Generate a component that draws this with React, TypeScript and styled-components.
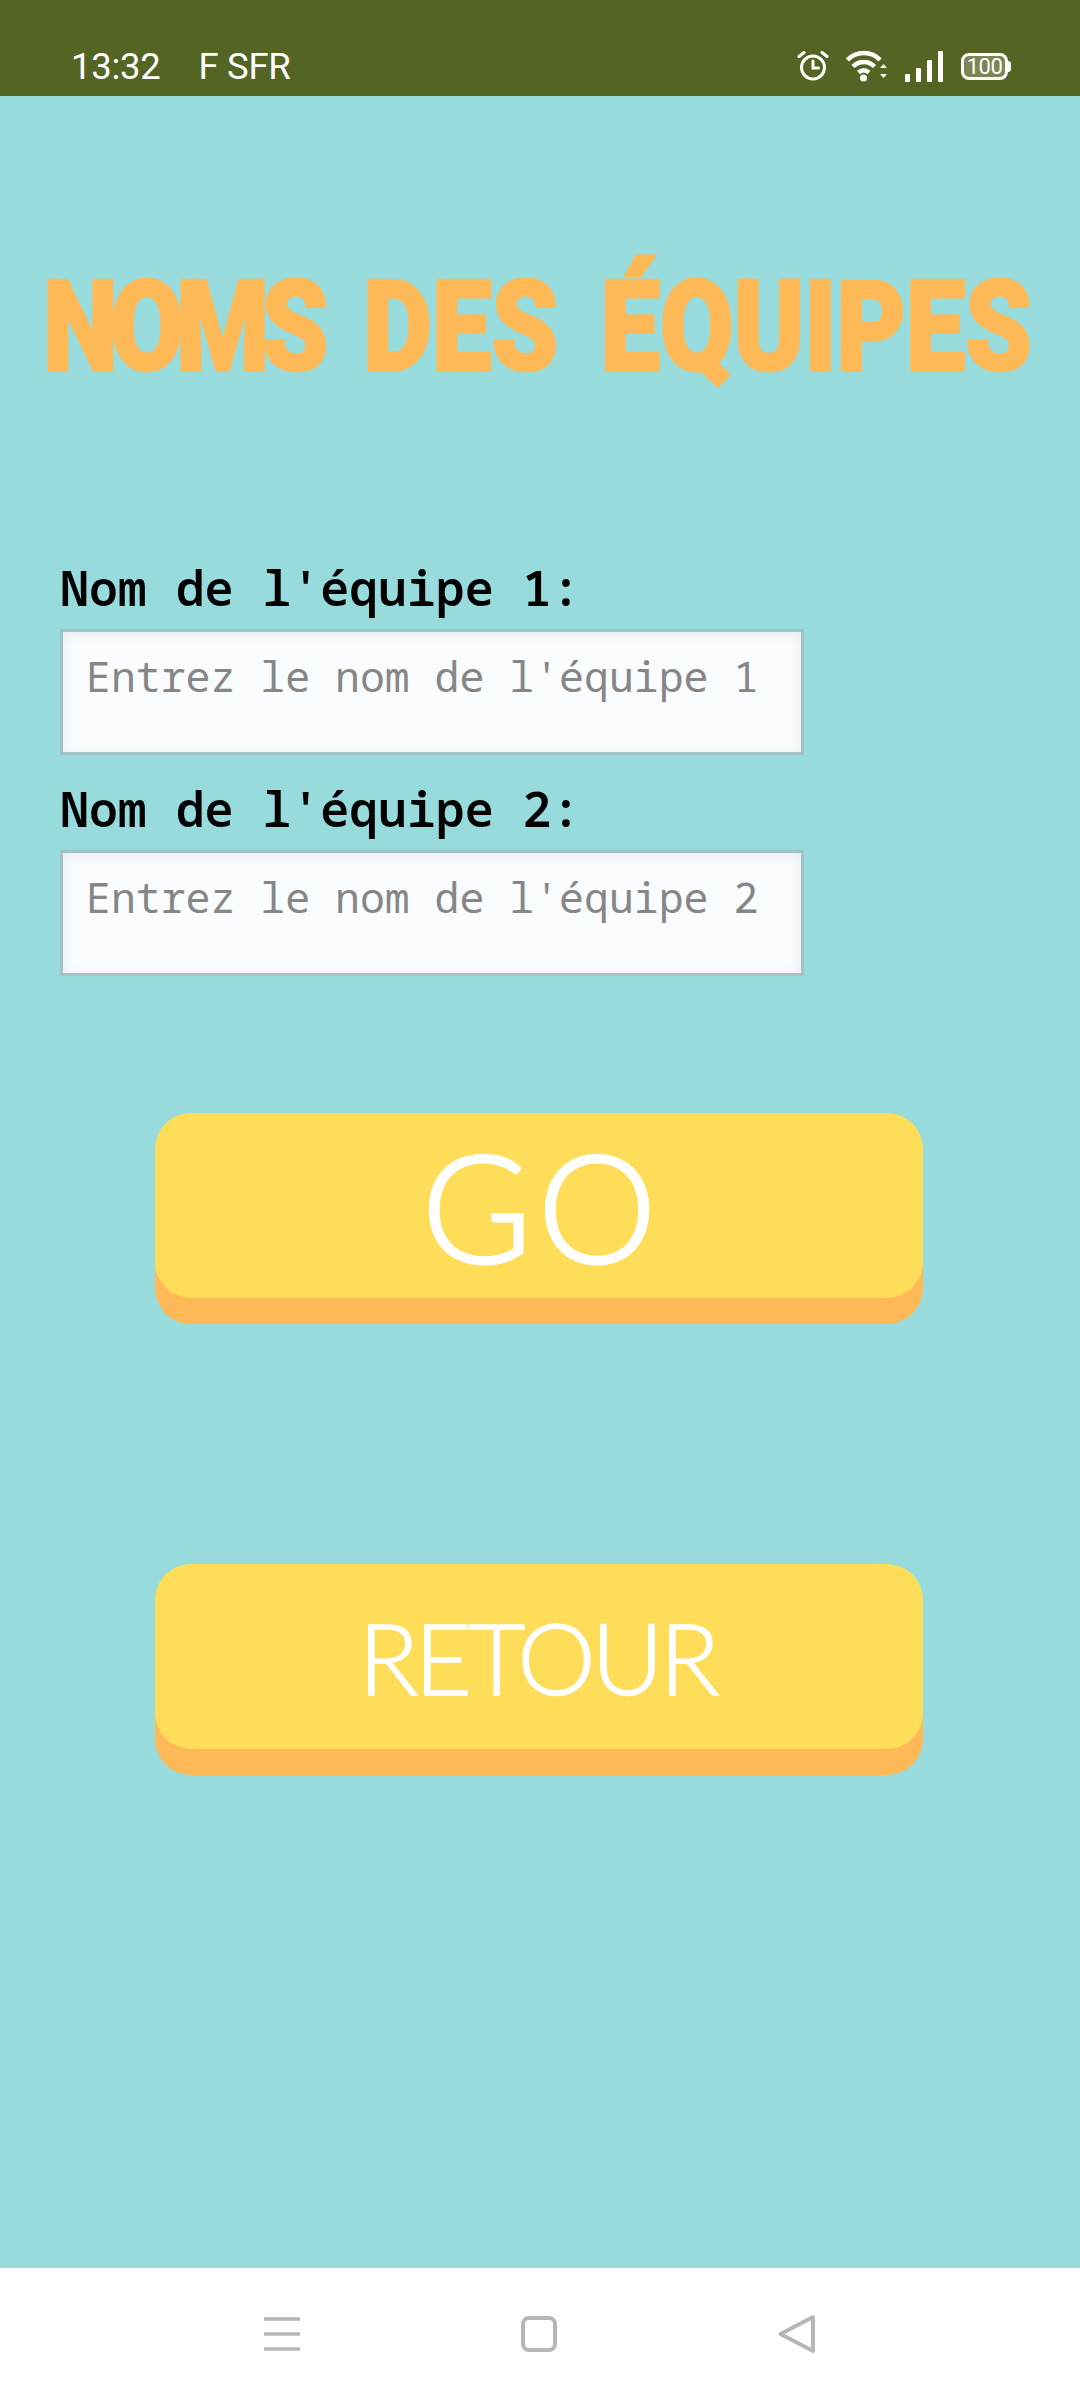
import React from "react";
import styled, { createGlobalStyle } from "styled-components";

const GlobalStyle = createGlobalStyle`
  html, body {
    margin: 0;
    padding: 0;
    background: #98dbdc;
  }
`;

const Screen = styled.div`
  width: 1080px;
  height: 2400px;
  display: flex;
  flex-direction: column;
  overflow: hidden;
  background: #98dbdc;
`;

const StatusBar = styled.header`
  height: 96px;
  flex: none;
  box-sizing: border-box;
  padding: 47px 69px 0 71px;
  display: flex;
  justify-content: space-between;
  align-items: flex-start;
  background: #536423;
  color: #fff;
  font-family: Roboto, "Liberation Sans", sans-serif;
  font-size: 36.5px;
  line-height: 40px;
  letter-spacing: -0.3px;
`;

const StatusLeft = styled.div`
  display: flex;
  gap: 38px;
`;

const StatusIcons = styled.div`
  display: flex;
  align-items: center;
  height: 38px;
  gap: 17px;
`;

const Main = styled.main`
  flex: 1;
  display: flex;
  flex-direction: column;
`;

const Title = styled.h1`
  margin: 156px 0 0 -5px;
  height: 150px;
  display: flex;
  justify-content: center;
  gap: 50px;
  white-space: nowrap;
  font-family: Roboto, "Liberation Sans", sans-serif;
  font-weight: 900;
  font-size: 126px;
  line-height: 150px;
  color: #ffb957;
  -webkit-text-stroke: 3px #ffb957;
  transform: scaleX(0.845);
`;

const Word = styled.span<{ $tracking?: number }>`
  letter-spacing: ${(props) => props.$tracking || 0}px;
`;

const Form = styled.form`
  margin: 159px 0 0 60px;
  display: flex;
  flex-direction: column;
`;

const Label = styled.label`
  font-family: "Noto Sans Mono", "DejaVu Sans Mono", "Liberation Mono", monospace;
  font-weight: 600;
  font-size: 48.2px;
  line-height: 52px;
  height: 68px;
  color: #000;
`;

const NameInput = styled.input`
  width: 744px;
  height: 126px;
  box-sizing: border-box;
  margin-bottom: 27px;
  padding: 0 23px 33px;
  border: 3px solid #a0c4c5;
  border-radius: 0;
  outline: none;
  background: #fafdff;
  box-shadow: inset 0 2px 12px rgba(0, 0, 0, 0.08);
  font-family: "Noto Sans Mono", "DejaVu Sans Mono", "Liberation Mono", monospace;
  font-size: 41.5px;

  &::placeholder {
    color: #868686;
    opacity: 1;
  }
`;

const Actions = styled.div`
  margin-top: 110px;
  padding-right: 2px;
  display: flex;
  flex-direction: column;
  align-items: center;
  gap: 240px;
`;

const BigButton = styled.button<{ $size: number; $tracking: number; $stroke: number }>`
  width: 768px;
  height: 185px;
  margin-bottom: 26px;
  padding: 0;
  border: none;
  border-radius: 36px;
  background: #ffdd59;
  box-shadow: 0 26px 0 #ffb957;
  color: #fff;
  font-family: Lato, "Open Sans", sans-serif;
  font-weight: 300;
  font-size: ${(props) => props.$size}px;
  letter-spacing: ${(props) => props.$tracking}px;
  text-indent: ${(props) => props.$tracking}px;
  -webkit-text-stroke: ${(props) => props.$stroke}px #fff;
  line-height: 181px;
`;

const NavBar = styled.nav`
  height: 132px;
  flex: none;
  display: flex;
  background: #fff;
  align-items: center;
  justify-content: center;
  gap: 221px;
  box-sizing: border-box;
`;

function AlarmIcon() {
  return (
    <svg width="32" height="30" viewBox="0 0 32 30" fill="none" stroke="#fff" strokeWidth="3">
      <circle cx="16" cy="16.5" r="11.5" />
      <path d="M16 10v7h5.5M2 5.5 7 1.5M30 5.5l-5-4" strokeLinecap="round" />
    </svg>
  );
}

function WifiIcon() {
  return (
    <svg width="42" height="32" viewBox="0 0 42 32" fill="none" stroke="#fff" strokeWidth="4.5">
      <path d="M1.5 10C10 .5 26 .5 34 10M7 16.5c6-6 15.5-6 21.5 0M12.5 22.5c3.5-3 7-3 10.5 0" />
      <circle cx="17.5" cy="28" r="3.5" fill="#fff" stroke="none" />
      <path d="M41 18l-3.5-4-3.5 4zM34 24l3.5 4 3.5-4z" fill="#fff" stroke="none" />
    </svg>
  );
}

function SignalIcon() {
  return (
    <svg width="39" height="31" viewBox="0 0 39 31" fill="#fff">
      <rect x="0" y="23" width="5" height="8" rx="1" />
      <rect x="11" y="17" width="5" height="14" rx="1" />
      <rect x="22" y="9" width="5" height="22" rx="1" />
      <rect x="33" y="0" width="5" height="31" rx="1" />
    </svg>
  );
}

const Battery = styled.div`
  position: relative;
  width: 47px;
  height: 27px;
  box-sizing: border-box;
  margin-right: 3px;
  border: 3px solid #fff;
  border-radius: 8px;
  background: #7b8655;
  color: #fff;
  font-family: Roboto, sans-serif;
  font-size: 22px;
  line-height: 21px;
  text-align: center;
  letter-spacing: -0.5px;

  &::after {
    content: "";
    position: absolute;
    right: -6px;
    top: 5px;
    width: 3px;
    height: 11px;
    border-radius: 0 3px 3px 0;
    background: #fff;
  }
`;

function MenuIcon() {
  return (
    <svg width="36" height="34" viewBox="0 0 36 34" stroke="#b7b7b7" strokeWidth="3.5">
      <path d="M0 2h36M0 17h36M0 32h36" />
    </svg>
  );
}

function HomeIcon() {
  return (
    <svg width="36" height="36" viewBox="0 0 36 36" fill="none" stroke="#b7b7b7" strokeWidth="4">
      <rect x="2" y="2" width="32" height="32" rx="6" />
    </svg>
  );
}

function BackIcon() {
  return (
    <svg width="38" height="40" viewBox="0 0 38 40" fill="none" stroke="#b7b7b7" strokeWidth="4" strokeLinejoin="round">
      <path d="M35 3 2.5 20 35 37z" />
    </svg>
  );
}

export default function App() {
  return (
    <Screen>
      <GlobalStyle />
      <StatusBar>
        <StatusLeft>
          <span>13:32</span>
          <span>F SFR</span>
        </StatusLeft>
        <StatusIcons>
          <AlarmIcon />
          <WifiIcon />
          <SignalIcon />
          <Battery>100</Battery>
        </StatusIcons>
      </StatusBar>
      <Main>
        <Title>
          <Word $tracking={-9}>NOMS</Word>
          <Word>DES</Word>
          <Word>ÉQUIPES</Word>
        </Title>
        <Form>
          <Label>Nom de l'équipe 1:</Label>
          <NameInput placeholder="Entrez le nom de l'équipe 1" />
          <Label>Nom de l'équipe 2:</Label>
          <NameInput placeholder="Entrez le nom de l'équipe 2" />
        </Form>
        <Actions>
          <BigButton type="button" $size={150} $tracking={6} $stroke={3}>GO</BigButton>
          <BigButton type="button" $size={99} $tracking={-4} $stroke={1.5}>RETOUR</BigButton>
        </Actions>
      </Main>
      <NavBar>
        <MenuIcon />
        <HomeIcon />
        <BackIcon />
      </NavBar>
    </Screen>
  );
}
